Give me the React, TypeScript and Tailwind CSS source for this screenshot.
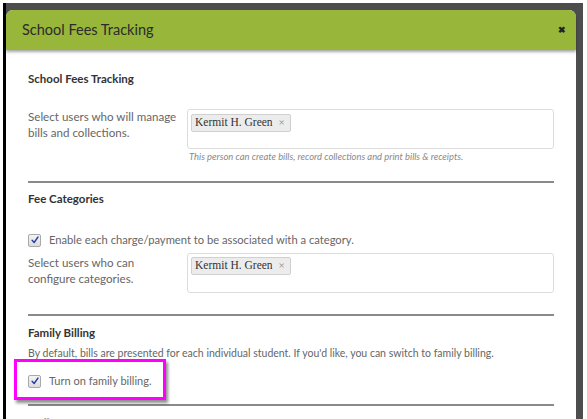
function Check() {
  return (
    <span className="inline-flex h-[13px] w-[13px] shrink-0 items-center justify-center rounded-[2px] border border-[#a9a9a9] bg-gradient-to-b from-[#f4f4f4] to-[#dcdcdc]">
      <svg viewBox="0 0 12 12" className="h-[10px] w-[10px]">
        <path d="M2.5 6.3 L5 9 L9.6 2.4" fill="none" stroke="#243f9c" strokeWidth="1.6" strokeLinecap="round" strokeLinejoin="round" />
      </svg>
    </span>
  )
}

function Tag({ name }: { name: string }) {
  return (
    <span className="inline-flex h-[18px] items-center gap-[6px] rounded-[2px] border border-[#d0d0d0] bg-[#ececec] pl-[3px] pr-[5px] font-['Liberation_Serif',serif] text-[11.5px] text-[#333]">
      {name}
      <span className="text-[11px] text-[#8a8a8a]">×</span>
    </span>
  )
}

function App() {
  return (
    <div className="flex h-[419px] w-[587px] overflow-hidden bg-white pl-[3px] pr-[4px] pt-[3px] font-['Lato',sans-serif]">
      {/* backdrop */}
      <div className="flex-1 border-l-[3px] border-black bg-[#4d4d4d] pr-[7px] pt-[7px]">
        <div className="h-full rounded-t-[7px] bg-white">
          {/* header */}
          <div className="flex h-[40px] items-center justify-between rounded-t-[7px] bg-[#97b63a] pl-[16px] pr-[10px] shadow-[0_2px_3px_rgba(0,0,0,0.35)]">
            <span className="text-[14.5px] text-[#2b2b2b]">School Fees Tracking</span>
            <span className="text-[9px] font-bold text-[#222]">✖</span>
          </div>

          <div className="px-[22px] text-[11.6px] text-[#666]">
            <div className="mt-[21px] text-[11.5px] leading-[16px] font-bold text-[#333]">School Fees Tracking</div>
            <div className="mt-[22px] flex">
              <div className="w-[159px] whitespace-nowrap leading-[16px]">
                Select users who will manage
                <br />
                bills and collections.
              </div>
              <div className="flex-1">
                <div className="h-[40px] rounded-[3px] border border-[#dcdcdc] pl-[3px] pt-[3px]">
                  <Tag name="Kermit H. Green" />
                </div>
                <div className="mt-[2px] pl-[2px] text-[9.4px] italic leading-[12px] text-[#888]">
                  This person can create bills, record collections and print bills &amp; receipts.
                </div>
              </div>
            </div>
            <div className="mt-[18px] h-[2px] bg-[#8a8a8a]" />

            <div className="mt-[8px] text-[11.5px] leading-[16px] font-bold text-[#333]">Fee Categories</div>
            <div className="mt-[26px] flex h-[14px] items-center gap-[8px] text-[11.2px]">
              <Check />
              <span>Enable each charge/payment to be associated with a category.</span>
            </div>
            <div className="mt-[6px] flex">
              <div className="w-[159px] whitespace-nowrap pt-[2px] leading-[16px]">
                Select users who can
                <br />
                configure categories.
              </div>
              <div className="flex-1">
                <div className="h-[40px] rounded-[3px] border border-[#dcdcdc] pl-[3px] pt-[2px]">
                  <Tag name="Kermit H. Green" />
                </div>
              </div>
            </div>
            <div className="mt-[21px] h-[2px] bg-[#8a8a8a]" />

            <div className="mt-[9px] text-[11.5px] leading-[16px] font-bold text-[#333]">Family Billing</div>
            <div className="mt-[4px] whitespace-nowrap text-[10.5px] leading-[16px]">
              By default, bills are presented for each individual student. If you'd like, you can switch to family billing.
            </div>
            <div className="relative mt-[13px] flex h-[14px] items-center gap-[8px] text-[11px]">
              <Check />
              <span>Turn on family billing.</span>
              {/* highlight annotation */}
              <div className="absolute left-[-14px] top-[-15px] h-[41px] w-[152px] border-[3px] border-[#ff00ff] shadow-[2px_3px_3px_rgba(0,0,0,0.45)]" />
            </div>
            <div className="mt-[16px] h-[2px] bg-[#8a8a8a]" />
            <div className="mt-[9px] text-[11.5px] leading-[16px] font-bold text-[#999]">Online Payments</div>
          </div>
        </div>
      </div>
    </div>
  )
}

export default App
